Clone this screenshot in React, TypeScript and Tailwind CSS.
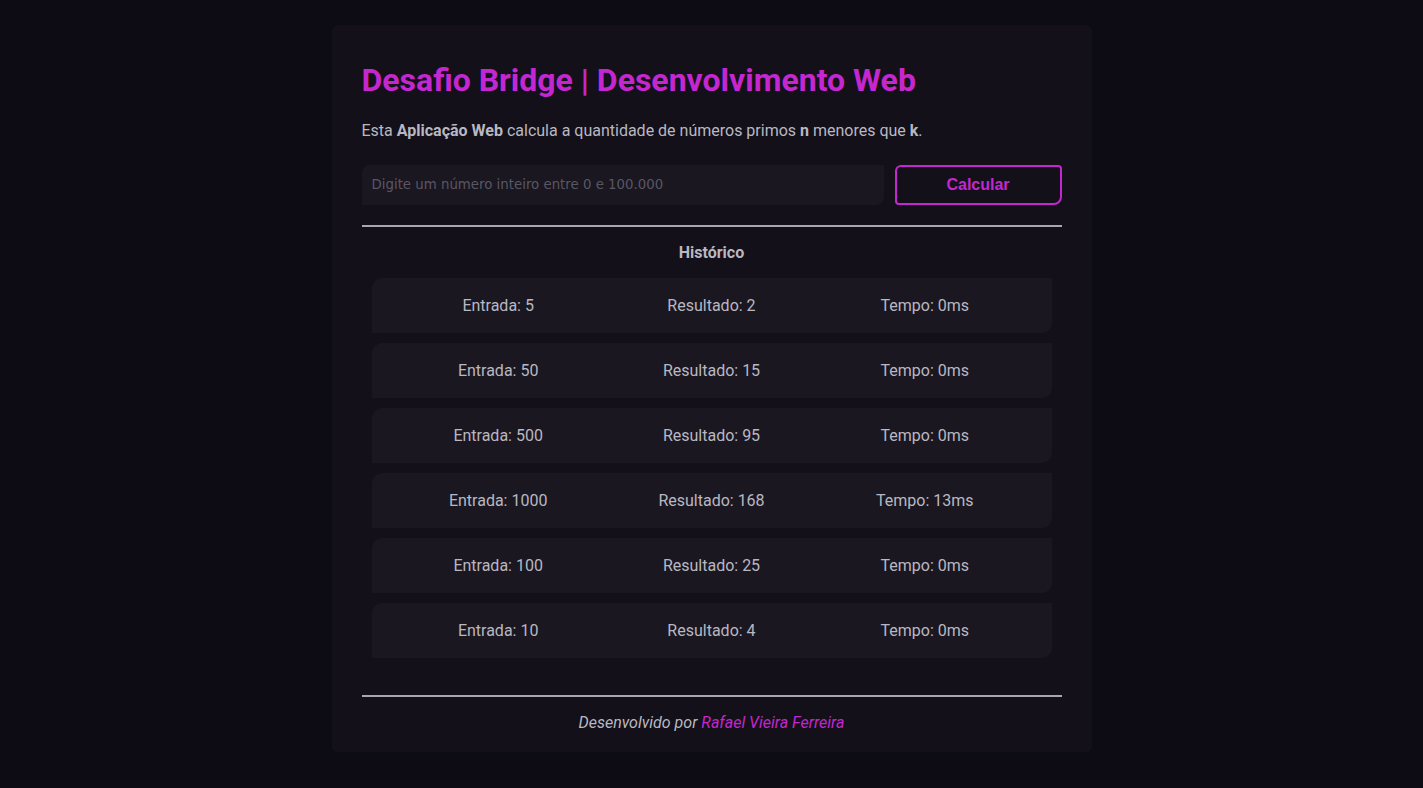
import React from "react";

const historico = [
  { entrada: 5, resultado: 2, tempo: 0 },
  { entrada: 50, resultado: 15, tempo: 0 },
  { entrada: 500, resultado: 95, tempo: 0 },
  { entrada: 1000, resultado: 168, tempo: 13 },
  { entrada: 100, resultado: 25, tempo: 0 },
  { entrada: 10, resultado: 4, tempo: 0 },
];

const App = () => {
  return (
    <div className="min-h-screen w-full bg-[#0d0b14] pt-[25px] pb-[36px] font-['Roboto',sans-serif] text-[#b9b8c2]">
      <div className="mx-auto w-[760px] rounded-md bg-[#131019] px-[30px] pt-[36px] pb-[17px]">
        <h1 className="text-[32px] leading-[38px] font-bold text-[#c427d0]">
          Desafio Bridge | Desenvolvimento Web
        </h1>
        <p className="mt-[20px] text-base leading-6">
          Esta <b>Aplicação Web</b> calcula a quantidade de números primos{" "}
          <b>n</b> menores que <b>k</b>.
        </p>

        <div className="mt-[22px] flex gap-[11px]">
          <input
            type="text"
            placeholder="Digite um número inteiro entre 0 e 100.000"
            className="h-10 flex-1 rounded-tl-lg rounded-br-lg bg-[#1a1721] px-[10px] pb-[1px] font-['DejaVu_Sans',sans-serif] text-[13.33px] text-[#b9b8c2] outline-none placeholder:text-[#595664]"
          />
          <button className="h-10 w-[167px] rounded-tl-md rounded-tr-sm rounded-bl-sm rounded-br-lg border-2 border-[#c427d0] font-['Liberation_Sans',Arial,sans-serif] text-base font-bold text-[#c427d0]">
            Calcular
          </button>
        </div>

        <div className="mt-[20px] h-[2px] bg-[#a8a7ab]" />

        <h2 className="mt-[14px] text-center text-base leading-6 font-bold">
          Histórico
        </h2>

        <div className="mt-[13px] flex flex-col gap-[10px] px-[10px]">
          {historico.map((item) => (
            <div
              key={item.entrada}
              className="grid h-[55px] grid-cols-3 items-center rounded-tl-[10px] rounded-br-[10px] bg-[#1a1721] px-[20px] text-center text-base"
            >
              <span>Entrada: {item.entrada}</span>
              <span>Resultado: {item.resultado}</span>
              <span>Tempo: {item.tempo}ms</span>
            </div>
          ))}
        </div>

        <div className="mt-[37px] h-[2px] bg-[#a8a7ab]" />

        <p className="mt-[14px] text-center text-base leading-6 italic">
          Desenvolvido por{" "}
          <a href="#" className="text-[#c427d0]">
            Rafael Vieira Ferreira
          </a>
        </p>
      </div>
    </div>
  );
};

export default App;
